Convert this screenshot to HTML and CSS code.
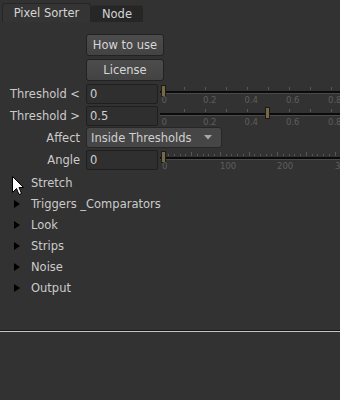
FILE: index.html
```html
<!DOCTYPE html>
<html>
<head>
<meta charset="utf-8">
<link rel="stylesheet" href="styles.css">
</head>
<body>
<div class="panel">
  <div class="tabs">
    <div class="tab active">Pixel Sorter</div>
    <div class="tab">Node</div>
  </div>
  <div class="knobs">
    <div class="btn-row"><button class="btn">How to use</button></div>
    <div class="btn-row"><button class="btn">License</button></div>
    <div class="row">
      <span class="label">Threshold &lt;</span>
      <span class="field">0</span>
      <svg class="slider" width="180" height="20" viewBox="0 0 180 20">
        <g stroke="#575757" stroke-width="1">
          <line x1="24.5" y1="3" x2="24.5" y2="6"/><line x1="45.5" y1="3" x2="45.5" y2="6"/><line x1="66.5" y1="3" x2="66.5" y2="6"/><line x1="87.5" y1="3" x2="87.5" y2="6"/><line x1="108.5" y1="3" x2="108.5" y2="6"/><line x1="129.5" y1="3" x2="129.5" y2="6"/><line x1="150.5" y1="3" x2="150.5" y2="6"/><line x1="171.5" y1="3" x2="171.5" y2="6"/>
        </g>
        <rect x="0" y="7" width="180" height="2" fill="#0b0b0b"/>
        <rect x="0" y="9" width="180" height="1" fill="#4a4a4a"/>
        <rect x="1.5" y="1.5" width="4" height="11" fill="#75694a" stroke="#1d1b14"/>
        <g class="ticklbl"><text x="1.5" y="19">0</text><text x="43" y="19">0.2</text><text x="84.5" y="19">0.4</text><text x="126" y="19">0.6</text><text x="168" y="19">0.8</text></g>
      </svg>
    </div>
    <div class="row">
      <span class="label">Threshold &gt;</span>
      <span class="field">0.5</span>
      <svg class="slider" width="180" height="20" viewBox="0 0 180 20">
        <g stroke="#575757" stroke-width="1">
          <line x1="24.5" y1="3" x2="24.5" y2="6"/><line x1="45.5" y1="3" x2="45.5" y2="6"/><line x1="66.5" y1="3" x2="66.5" y2="6"/><line x1="87.5" y1="3" x2="87.5" y2="6"/><line x1="108.5" y1="3" x2="108.5" y2="6"/><line x1="129.5" y1="3" x2="129.5" y2="6"/><line x1="150.5" y1="3" x2="150.5" y2="6"/><line x1="171.5" y1="3" x2="171.5" y2="6"/>
        </g>
        <rect x="0" y="7" width="180" height="2" fill="#0b0b0b"/>
        <rect x="0" y="9" width="180" height="1" fill="#4a4a4a"/>
        <rect x="105.5" y="1.5" width="4" height="11" fill="#75694a" stroke="#1d1b14"/>
        <g class="ticklbl"><text x="1.5" y="19">0</text><text x="43" y="19">0.2</text><text x="84.5" y="19">0.4</text><text x="126" y="19">0.6</text><text x="168" y="19">0.8</text></g>
      </svg>
    </div>
    <div class="row">
      <span class="label">Affect</span>
      <span class="dropdown">Inside Thresholds<svg class="caret" width="8" height="5" viewBox="0 0 8 5"><path d="M0 0H8L4 4.5Z" fill="#a8a8a8"/></svg></span>
    </div>
    <div class="row">
      <span class="label">Angle</span>
      <span class="field">0</span>
      <svg class="slider" width="180" height="20" viewBox="0 0 180 20">
        <g stroke="#575757" stroke-width="1">
          <line x1="8.5" y1="4" x2="8.5" y2="6"/><line x1="14.5" y1="4" x2="14.5" y2="6"/><line x1="20.5" y1="4" x2="20.5" y2="6"/><line x1="25.5" y1="4" x2="25.5" y2="6"/><line x1="31.5" y1="2" x2="31.5" y2="6"/><line x1="37.5" y1="4" x2="37.5" y2="6"/><line x1="43.5" y1="4" x2="43.5" y2="6"/><line x1="48.5" y1="4" x2="48.5" y2="6"/><line x1="54.5" y1="4" x2="54.5" y2="6"/><line x1="60.5" y1="2" x2="60.5" y2="6"/>
          <line x1="66.5" y1="4" x2="66.5" y2="6"/><line x1="71.5" y1="4" x2="71.5" y2="6"/><line x1="77.5" y1="4" x2="77.5" y2="6"/><line x1="83.5" y1="4" x2="83.5" y2="6"/><line x1="89.5" y1="2" x2="89.5" y2="6"/><line x1="94.5" y1="4" x2="94.5" y2="6"/><line x1="100.5" y1="4" x2="100.5" y2="6"/><line x1="106.5" y1="4" x2="106.5" y2="6"/><line x1="111.5" y1="4" x2="111.5" y2="6"/><line x1="117.5" y1="2" x2="117.5" y2="6"/>
          <line x1="123.5" y1="4" x2="123.5" y2="6"/><line x1="129.5" y1="4" x2="129.5" y2="6"/><line x1="134.5" y1="4" x2="134.5" y2="6"/><line x1="140.5" y1="4" x2="140.5" y2="6"/><line x1="146.5" y1="2" x2="146.5" y2="6"/><line x1="152.5" y1="4" x2="152.5" y2="6"/><line x1="157.5" y1="4" x2="157.5" y2="6"/><line x1="163.5" y1="4" x2="163.5" y2="6"/><line x1="169.5" y1="4" x2="169.5" y2="6"/><line x1="175.5" y1="2" x2="175.5" y2="6"/>
        </g>
        <rect x="0" y="7" width="180" height="2" fill="#0b0b0b"/>
        <rect x="0" y="9" width="180" height="1" fill="#4a4a4a"/>
        <rect x="1.5" y="1.5" width="4" height="11" fill="#75694a" stroke="#1d1b14"/>
        <g class="ticklbl"><text x="2" y="19">0</text><text x="60" y="19">100</text><text x="117" y="19">200</text><text x="175" y="19">300</text></g>
      </svg>
    </div>
  </div>
  <ul class="groups">
    <li class="group">Stretch</li>
    <li class="group">Triggers _Comparators</li>
    <li class="group">Look</li>
    <li class="group">Strips</li>
    <li class="group">Noise</li>
    <li class="group">Output</li>
  </ul>
  <div class="separator"></div>
</div>
<svg class="cursor" width="12" height="19" viewBox="0 0 12 19"><path d="M0.5 0.5V16.5L4.5 12.5L7 18.5L9.5 17.5L7 11.5H11.5Z" fill="#ffffff" stroke="#000000" stroke-width="1"/></svg>
</body>
</html>
```
FILE: styles.css
```css
html, body {
  margin: 0;
  padding: 0;
  background: #323232;
}
body {
  width: 340px;
  height: 400px;
  overflow: hidden;
  font-family: "DejaVu Sans", Verdana, sans-serif;
  font-size: 11.5px;
  color: #cbcbcb;
}
.panel {
  display: flex;
  flex-direction: column;
}
.tabs {
  display: flex;
  align-items: flex-end;
  height: 22px;
  padding-left: 2px;
}
.tab {
  height: 17px;
  line-height: 17px;
  padding: 0;
  background: #262626;
  color: #d4d4d4;
  border-top-left-radius: 3px;
  border-top-right-radius: 3px;
  box-sizing: border-box;
  width: 52px;
  text-align: center;
  border-top: 1px solid #2c2c2c;
}
.tab.active {
  width: 89px;
  height: 19px;
  line-height: 18px;
  background: #343434;
  border: 1px solid #262626;
  border-bottom: none;
}
.knobs {
  display: flex;
  flex-direction: column;
  gap: 2px;
  padding-top: 12px;
}
.btn-row {
  padding-left: 86px;
  height: 23px;
}
.btn {
  width: 78px;
  height: 22px;
  font: inherit;
  color: #d6d6d6;
  background: linear-gradient(#4c4c4c, #434343);
  border: 1px solid #222222;
  border-radius: 3px;
  padding: 0;
  margin: 0;
}
.row {
  display: flex;
  align-items: flex-start;
  height: 20px;
}
.label {
  width: 80px;
  text-align: right;
  line-height: 20px;
  margin-right: 6px;
  white-space: nowrap;
}
.field {
  width: 72px;
  height: 20px;
  box-sizing: border-box;
  background: #2f2f2f;
  border: 1px solid #1f1f1f;
  border-radius: 2px;
  padding-left: 3px;
  line-height: 18px;
  color: #d0d0d0;
}
.slider {
  display: block;
  margin-left: 2px;
}
.ticklbl text {
  font-family: "DejaVu Sans", sans-serif;
  font-size: 8.5px;
  fill: #5e5e5e;
}
.dropdown {
  width: 136px;
  height: 21px;
  box-sizing: border-box;
  background: #464646;
  border: 1px solid #262626;
  border-radius: 3px;
  padding: 0 9px 0 4px;
  display: flex;
  align-items: center;
  justify-content: space-between;
  color: #d0d0d0;
  margin-top: -1px;
}
.caret {
  display: block;
}
.groups {
  list-style: none;
  margin: 3px 0 0 0;
  padding: 0;
}
.group {
  height: 21px;
  line-height: 21px;
  padding-left: 31px;
  position: relative;
}
.group::before {
  content: "";
  position: absolute;
  left: 14px;
  top: 6px;
  border-left: 6px solid #000000;
  border-top: 4px solid transparent;
  border-bottom: 4px solid transparent;
}
.separator {
  margin-top: 31px;
  height: 1px;
  background: #161616;
  border-bottom: 1px solid #c4c4c4;
}
.cursor {
  position: absolute;
  left: 12px;
  top: 176px;
}
```
